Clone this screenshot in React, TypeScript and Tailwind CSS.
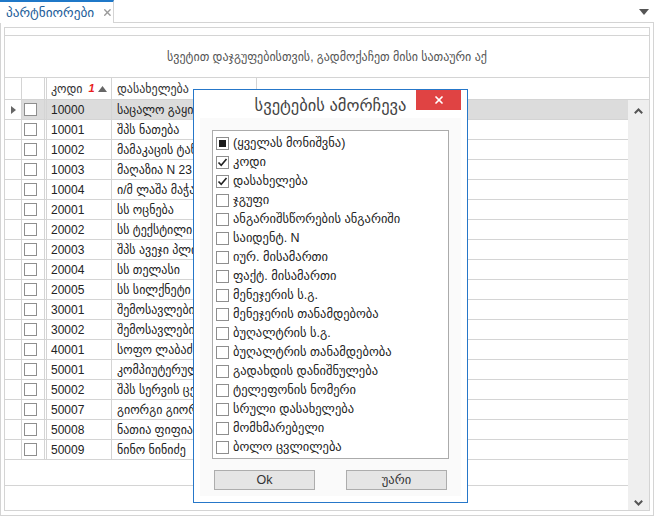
import { X } from "lucide-react"

const rows: [string, string][] = [
  ["10000", "საცალო გაყიდვები"],
  ["10001", "შპს ნათება"],
  ["10002", "მამაკაცის ტანსაცმელი"],
  ["10003", "მაღაზია N 23"],
  ["10004", "ი/მ ლაშა მაჭავარიანი"],
  ["20001", "სს ოცნება"],
  ["20002", "სს ტექსტილი"],
  ["20003", "შპს ავეჯი პლიუსი"],
  ["20004", "სს თელასი"],
  ["20005", "სს სილქნეტი"],
  ["30001", "შემოსავლების სამსახური"],
  ["30002", "შემოსავლების სამსახური"],
  ["40001", "სოფო ლაბაძე"],
  ["50001", "კომპიუტერული ცენტრი"],
  ["50002", "შპს სერვის ცენტრი"],
  ["50007", "გიორგი გიორგაძე"],
  ["50008", "ნათია ფიფია"],
  ["50009", "ნინო ნინიძე"],
]

const columns = [
  "კოდი",
  "დასახელება",
  "ჯგუფი",
  "ანგარიშსწორების ანგარიში",
  "საიდენტ. N",
  "იურ. მისამართი",
  "ფაქტ. მისამართი",
  "მენეჯერის ს.გ.",
  "მენეჯერის თანამდებობა",
  "ბუღალტრის ს.გ.",
  "ბუღალტრის თანამდებობა",
  "გადახდის დანიშნულება",
  "ტელეფონის ნომერი",
  "სრული დასახელება",
  "მომხმარებელი",
  "ბოლო ცვლილება",
]

function Box({ state }: { state?: "on" | "mixed" }) {
  return (
    <span className="w-[13px] h-[13px] border border-[#8e8e8e] bg-white flex items-center justify-center shrink-0">
      {state === "mixed" && <span className="w-[7px] h-[7px] bg-[#1a1a1a]" />}
      {state === "on" && (
        <svg width="11" height="11" viewBox="0 0 11 11">
          <path d="M1.5 5.5 L4.2 8.3 L9.5 2" fill="none" stroke="#222" strokeWidth="1.6" />
        </svg>
      )}
    </span>
  )
}

function Modal() {
  return (
    <div className="absolute left-[193px] top-[89px] w-[275px] h-[414px] border border-[#2677c9] bg-white flex flex-col">
      <div className="relative h-[28px] flex items-center justify-center">
        <span className="text-[16.5px] leading-[20px] text-[#444] pt-[1px]">სვეტების ამორჩევა</span>
        <div className="absolute right-[6px] top-0 w-[45px] h-[20px] bg-[#e04343] flex items-center justify-center">
          <X size={12} strokeWidth={3.5} color="#fff" />
        </div>
      </div>
      <div className="flex-1 mx-[6px] mb-[6px] bg-[#fafafa] flex flex-col px-[12px] pt-[12px]">
        <div className="h-[329px] border border-[#ababab] bg-white pt-[3px] px-[3px]">
          <div className="h-[19px] flex items-center gap-[4px] text-[12.5px] leading-[19px] text-[#222]">
            <Box state="mixed" />
            <span>(ყველას მონიშვნა)</span>
          </div>
          {columns.map((c, i) => (
            <div
              key={c}
              className="h-[19px] flex items-center gap-[4px] text-[12.5px] leading-[19px] text-[#222] whitespace-nowrap"
            >
              <Box state={i < 2 ? "on" : undefined} />
              <span>{c}</span>
            </div>
          ))}
        </div>
        <div className="flex justify-between mt-[11px] px-[2px]">
          <button className="w-[101px] h-[20px] border border-[#adadad] bg-[#e5e5e5] text-[12.5px] text-[#333]">Ok</button>
          <button className="w-[101px] h-[20px] border border-[#adadad] bg-[#e5e5e5] text-[12.5px] text-[#333]">
            უარი
          </button>
        </div>
      </div>
    </div>
  )
}

export default function App() {
  return (
    <div
      className="relative w-[654px] h-[519px] bg-white overflow-hidden text-[#333]"
      style={{ fontFamily: "'Liberation Sans', 'DejaVu Sans', sans-serif" }}
    >
      {/* tab strip */}
      <div className="h-[23px] flex">
        <div className="w-[114px] border-t-2 border-r border-t-[#1f78c8] border-r-[#d4d4d4] flex items-center pl-[6px] gap-[8px]">
          <span className="text-[13.3px] text-[#1c5d99]">პარტნიორები</span>
          <X size={11} strokeWidth={3} color="#9a9a9a" />
        </div>
        <div className="flex-1 border-b border-[#d4d4d4] flex justify-end items-center pr-[5px] pt-[1px]">
          <svg width="10" height="6" viewBox="0 0 10 6">
            <path d="M0 0 H10 L5 6 Z" fill="#555" />
          </svg>
        </div>
      </div>

      {/* panel */}
      <div className="h-[493px] border-x border-b border-[#d4d4d4] pt-[4px] px-[3px] pb-[4px]">
        <div className="h-full border border-[#d4d4d4] flex flex-col">
          <div className="h-[8px] border-b border-[#d4d4d4]" />
          <div className="h-[42px] border-b border-[#d4d4d4] flex items-center justify-center text-[12px] text-[#555]">
            სვეტით დაჯგუფებისთვის, გადმოქაჩეთ მისი სათაური აქ
          </div>
          {/* header */}
          <div className="h-[22px] border-b border-[#d4d4d4] flex text-[12px] text-[#333]">
            <div className="w-[17px] border-r border-[#d4d4d4]" />
            <div className="w-[23px] border-r border-[#d4d4d4]" />
            <div className="w-[2px] border-r border-[#d4d4d4]" />
            <div className="w-[65px] border-r border-[#d4d4d4] flex items-center pl-[4px]">
              <span>კოდი</span>
              <span className="ml-[6px] text-[11px] font-bold italic text-[#e81c1c]">1</span>
              <svg className="ml-[3px]" width="9" height="6" viewBox="0 0 9 6">
                <path d="M0 6 L4.5 0 L9 6 Z" fill="#666" />
              </svg>
            </div>
            <div className="w-[145px] border-r border-[#d4d4d4] flex items-center pl-[5px] whitespace-nowrap overflow-hidden">
              დასახელება
            </div>
            <div className="flex-1" />
          </div>
          {/* body */}
          <div className="flex-1 flex">
            <div className="flex-1 flex flex-col">
              {rows.map(([code, name], i) => (
                <div
                  key={code}
                  className={`h-[20px] border-b border-[#d4d4d4] flex text-[12px] text-[#222] ${i === 0 ? "bg-[#dcdcdc]" : ""}`}
                >
                  <div className="w-[17px] border-r border-[#d4d4d4] flex items-center justify-center bg-white">
                    {i === 0 && (
                      <svg width="5" height="8" viewBox="0 0 5 8">
                        <path d="M0 0 L5 4 L0 8 Z" fill="#666" />
                      </svg>
                    )}
                  </div>
                  <div className="w-[23px] border-r border-[#d4d4d4] flex items-center pl-[2px]">
                    <Box />
                  </div>
                  <div className="w-[2px] border-r border-[#d4d4d4]" />
                  <div className="w-[65px] border-r border-[#d4d4d4] flex items-center pl-[4px]">{code}</div>
                  <div className="w-[145px] border-r border-[#d4d4d4] flex items-center pl-[5px] whitespace-nowrap overflow-hidden">
                    {name}
                  </div>
                  <div className="flex-1" />
                </div>
              ))}
              <div className="flex-1 border-b border-[#d4d4d4]" />
              <div className="h-[24px]" />
            </div>
            {/* scrollbar */}
            <div className="w-[21px] bg-[#efefef] flex flex-col justify-between items-center pt-[8px] pb-[4px]">
              <svg width="9" height="6" viewBox="0 0 9 6">
                <path d="M0.8 5.2 L4.5 1.5 L8.2 5.2" fill="none" stroke="#555" strokeWidth="2" />
              </svg>
              <svg width="9" height="6" viewBox="0 0 9 6">
                <path d="M0.8 0.8 L4.5 4.5 L8.2 0.8" fill="none" stroke="#555" strokeWidth="2" />
              </svg>
            </div>
          </div>
        </div>
      </div>

      <Modal />
    </div>
  )
}
